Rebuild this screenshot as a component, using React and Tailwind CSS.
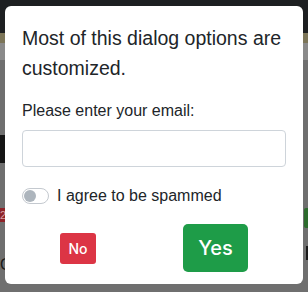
import React, { useState } from 'react';

export default function App() {
  const [agree, setAgree] = useState(false);
  const [email, setEmail] = useState('');

  return (
    <div className="relative w-[308px] h-[292px] overflow-hidden bg-[#6f6f6f] font-['Liberation_Sans',Arial,sans-serif]">
      {/* page behind the backdrop */}
      <div className="h-[33px] bg-[#1d1f21]" />
      <div className="h-[10px] bg-[#7c7558]" />
      <div className="h-[17px] bg-[#8a8a8a]" />
      <div className="flex justify-between h-[232px]">
        <div className="flex flex-col w-[5px]">
          <div className="mt-[75px] h-[28px] bg-[#141414]" />
          <div className="mt-[45px] h-[14px] bg-[#8e2328] text-[11px] leading-[14px] text-[#d9a0a3] overflow-hidden">2</div>
          <div className="mt-[36px] text-[16px] leading-[14px] text-[#1a1a1a] overflow-hidden">O</div>
        </div>
        <div className="flex flex-col w-[5px] items-end">
          <div className="mt-[148px] w-[4px] h-[20px] bg-[#2c6b2d] rounded-l-[2px]" />
          <div className="mt-[18px] w-[2px] h-[14px] bg-[#1a1a1a]" />
        </div>
      </div>

      {/* dialog */}
      <div className="absolute left-[5px] top-[6px] w-[298px] h-[278px] bg-white rounded-[6px] px-[17px] pt-[17px] text-[#212529]">
        <h2 className="text-[19.5px] leading-[30px]">Most of this dialog options are customized.</h2>
        <label className="block mt-[16px] text-[16px] leading-[24px]">Please enter your email:</label>
        <input
          type="email"
          value={email}
          onChange={(e) => setEmail(e.target.value)}
          className="block mt-[7px] w-[264px] h-[37px] border border-[#ced4da] rounded-[4px] px-3 text-[16px] outline-none"
        />
        <label className="flex items-center mt-[17px] h-[24px] text-[16px] cursor-pointer">
          <button
            type="button"
            onClick={() => setAgree(!agree)}
            className={agree
              ? 'relative w-[27px] h-[16px] rounded-full border border-[#0d6efd] bg-[#0d6efd]'
              : 'relative w-[27px] h-[16px] rounded-full border border-[#c4c9cf] bg-white'}
          >
            <span className={agree
              ? 'absolute top-[1px] left-[12px] w-[12px] h-[12px] rounded-full bg-white'
              : 'absolute top-[1px] left-[1px] w-[12px] h-[12px] rounded-full bg-[#adb5bd]'} />
          </button>
          <span className="ml-[8px]">I agree to be spammed</span>
        </label>
        <div className="flex items-center mt-[16px] pl-[38px] font-['Inter',sans-serif] font-medium">
          <button className="w-[36px] h-[31px] rounded-[3px] bg-[#dc3545] text-white text-[14px]">No</button>
          <button className="ml-[87px] w-[65px] h-[48px] rounded-[5px] bg-[#1e9c48] text-white text-[20px]">Yes</button>
        </div>
      </div>
    </div>
  );
}
